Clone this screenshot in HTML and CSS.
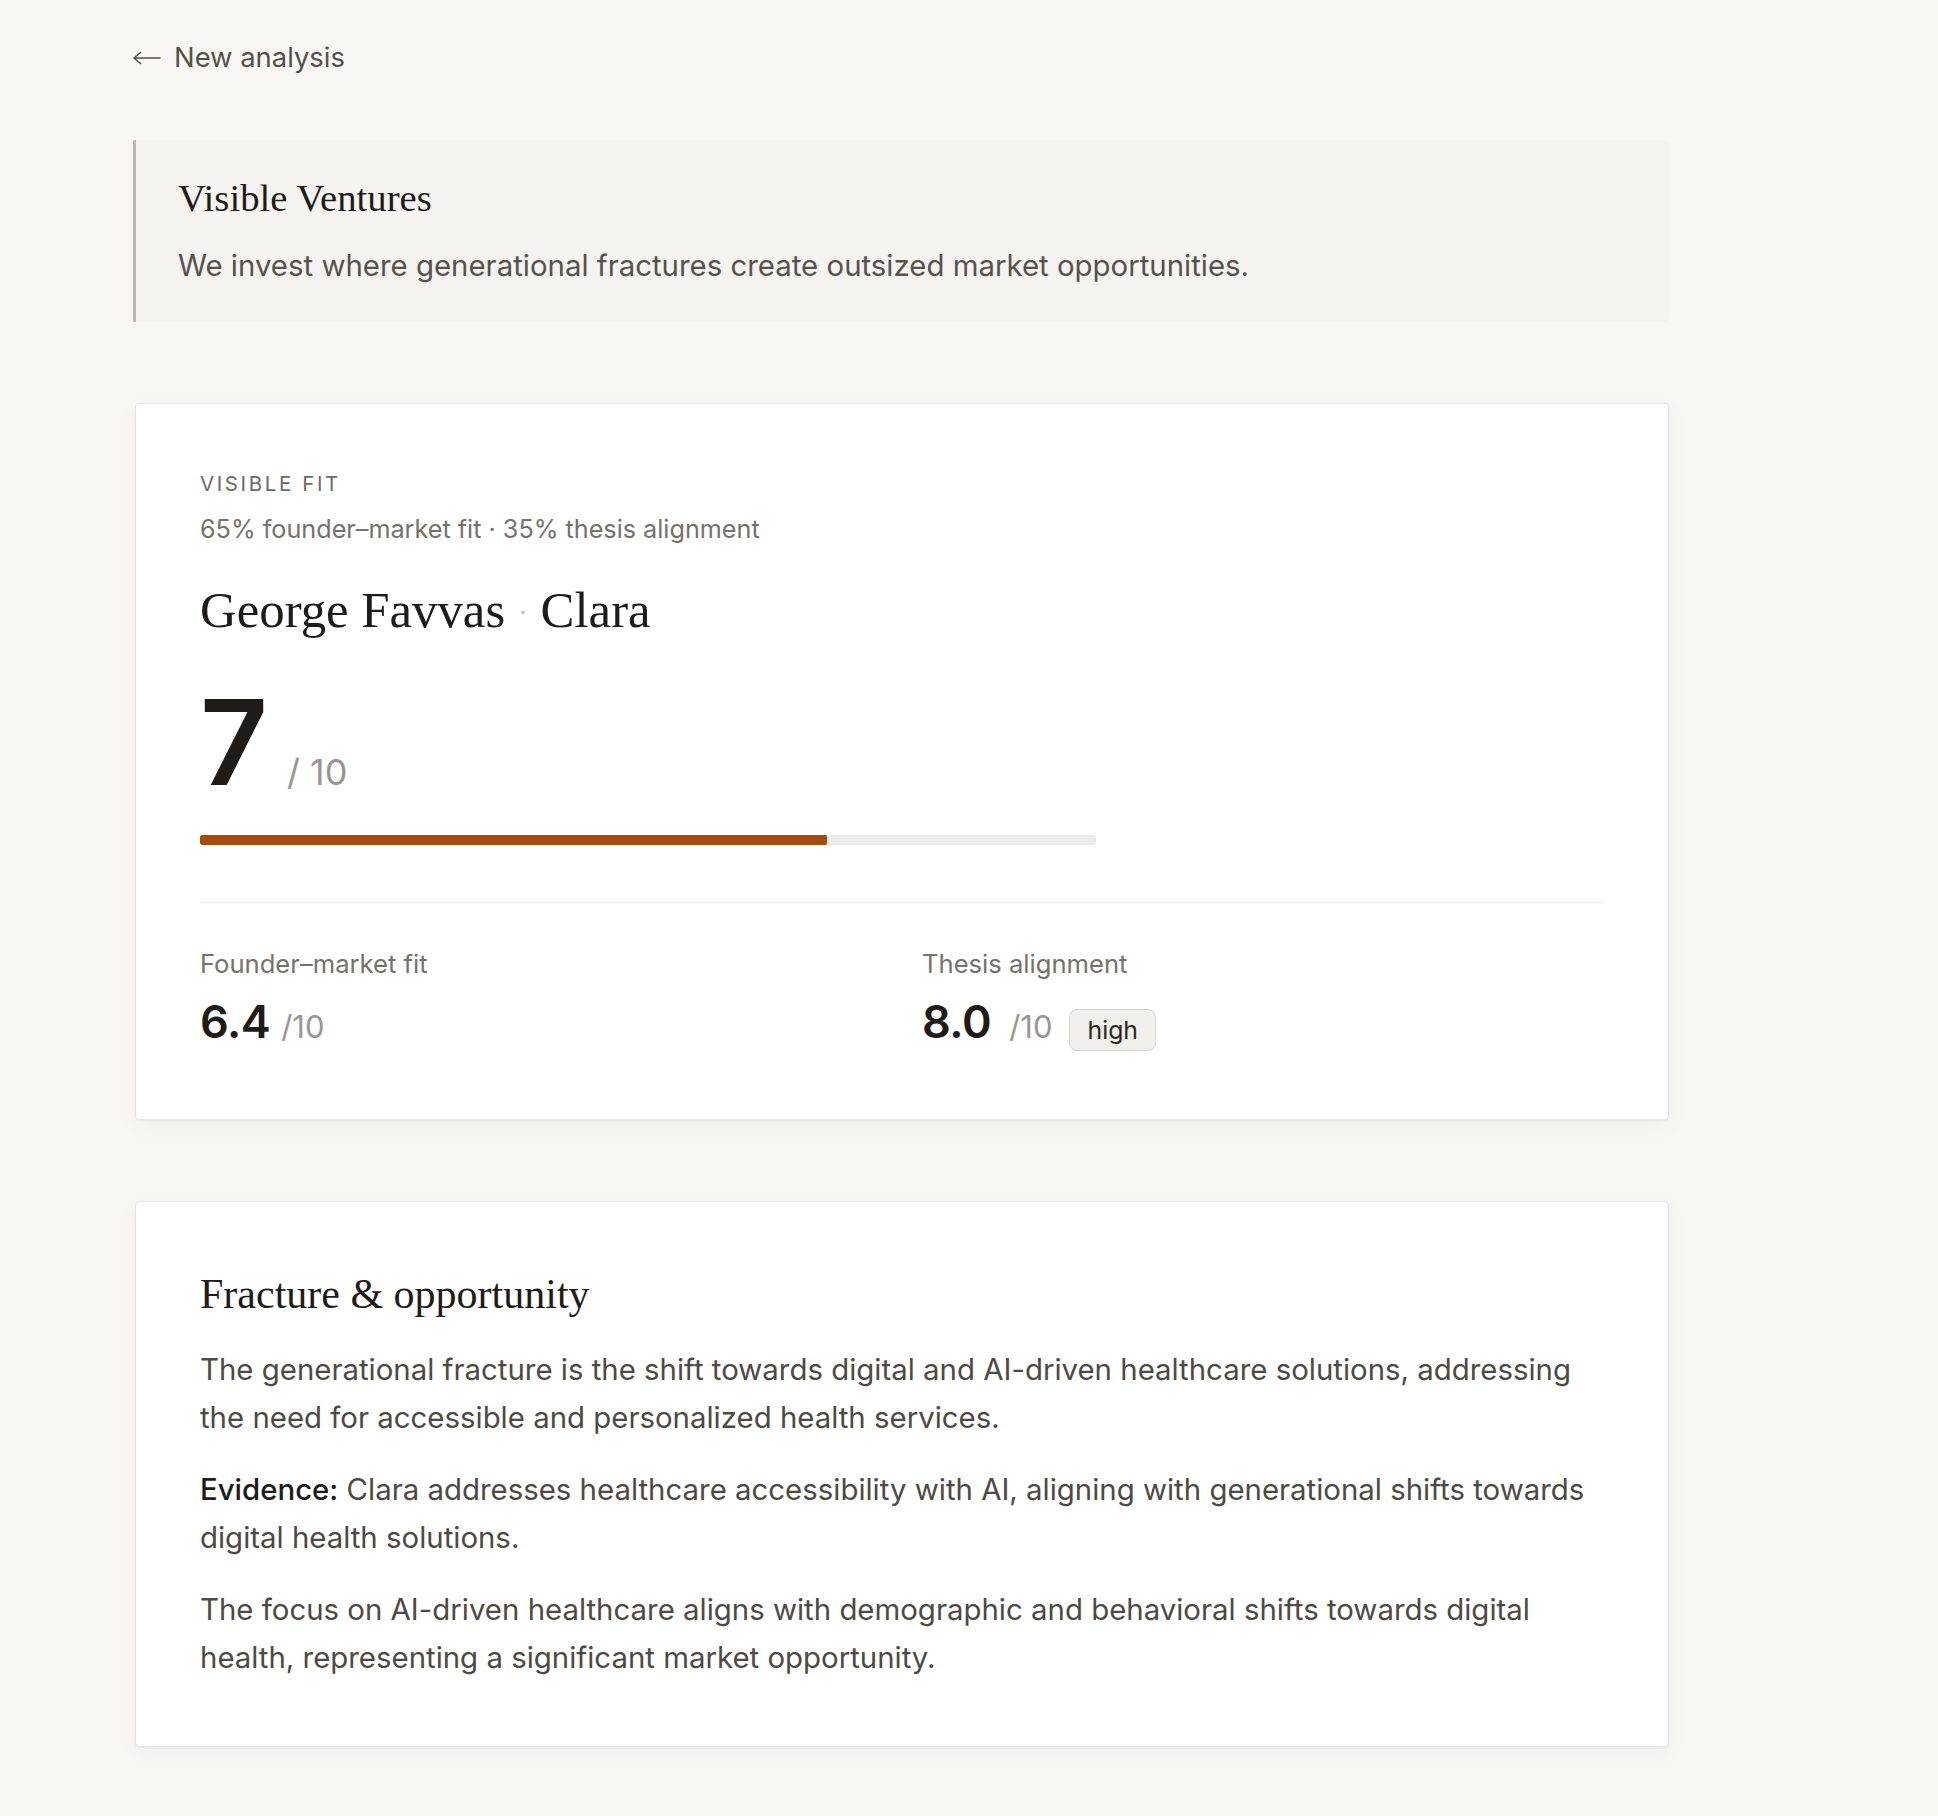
FILE: index.html
```html
<!DOCTYPE html>
<html lang="en">
<head>
<meta charset="utf-8">
<title>Visible Fit — George Favvas · Clara</title>
<link rel="stylesheet" href="styles.css">
</head>
<body>
<main class="page">
  <a class="back" href="#"><svg class="back-arrow" width="28" height="14" viewBox="0 0 28 14" aria-hidden="true"><path d="M1 7 H27 M1 7 L7.5 1.5 M1 7 L7.5 12.5" fill="none" stroke="currentColor" stroke-width="1.6" stroke-linecap="round" stroke-linejoin="round"/></svg><span>New analysis</span></a>

  <section class="thesis">
    <h2 class="thesis-title">Visible Ventures</h2>
    <p class="thesis-text">We invest where generational fractures create outsized market opportunities.</p>
  </section>

  <section class="card score-card">
    <div class="eyebrow">VISIBLE FIT</div>
    <div class="weights">65% founder–market fit · 35% thesis alignment</div>
    <h1 class="name">George Favvas <span class="name-dot">·</span> Clara</h1>
    <div class="score">
      <span class="score-num">7</span>
      <span class="score-max">/ 10</span>
    </div>
    <div class="bar"><div class="bar-fill" style="width: 70%"></div></div>
    <div class="stats">
      <div class="stat">
        <div class="stat-label">Founder–market fit</div>
        <div class="stat-value"><span class="stat-num">6.4</span><span class="stat-max">/10</span></div>
      </div>
      <div class="stat">
        <div class="stat-label">Thesis alignment</div>
        <div class="stat-value"><span class="stat-num">8.0</span><span class="stat-max">/10</span><span class="badge">high</span></div>
      </div>
    </div>
  </section>

  <section class="card text-card">
    <h2 class="section-title">Fracture &amp; opportunity</h2>
    <p class="para">The generational fracture is the shift towards digital and AI-driven healthcare solutions, addressing the need for accessible and personalized health services.</p>
    <p class="para"><span class="lead">Evidence:</span> Clara addresses healthcare accessibility with AI, aligning with generational shifts towards digital health solutions.</p>
    <p class="para">The focus on AI-driven healthcare aligns with demographic and behavioral shifts towards digital health, representing a significant market opportunity.</p>
  </section>
</main>
</body>
</html>
```

FILE: styles.css
```css
* { box-sizing: border-box; }

html, body {
  margin: 0;
  padding: 0;
  background: #f8f7f4;
}

body {
  font-family: Inter, "Noto Sans", "Liberation Sans", sans-serif;
  color: #1e1b19;
}

.page {
  width: 1536px;
  padding: 41px 0 70px 0;
  margin-left: 133px;
  display: flex;
  flex-direction: column;
}

.back {
  align-self: flex-start;
  display: flex;
  align-items: center;
  gap: 13px;
  font-size: 27.4px;
  line-height: 32px;
  color: #55504b;
  text-decoration: none;
}

.back-arrow {
  display: block;
  flex: none;
  margin-top: 1px;
}

.thesis {
  margin-top: 67px;
  background: #f4f3f0;
  border-left: 3px solid #bcb7b1;
  border-radius: 2px 6px 6px 2px;
  padding: 38px 40px 36px 42px;
}

.thesis-title {
  margin: 0;
  font-family: "Liberation Serif", "DejaVu Serif", serif;
  font-weight: 400;
  font-size: 38.7px;
  line-height: 40px;
  color: #1e1b19;
}

.thesis-text {
  margin: 28px 0 0 0;
  font-size: 29.4px;
  line-height: 40px;
  color: #57524d;
}

.card {
  background: #ffffff;
  border: 1px solid #e7e5e1;
  border-radius: 4px;
  box-shadow: 0 1px 2px rgba(40, 30, 20, 0.05), 0 6px 24px rgba(40, 30, 20, 0.04);
  padding: 64px;
  margin-left: 2px;
  width: 1534px;
}

.score-card {
  margin-top: 81px;
  padding-bottom: 69px;
}

.eyebrow {
  font-size: 20.5px;
  line-height: 32px;
  letter-spacing: 2.6px;
  color: #6e6964;
}

.weights {
  margin-top: 13px;
  font-size: 25.2px;
  line-height: 32px;
  color: #76716c;
}

.name {
  margin: 35px 0 0 0;
  font-family: "Liberation Serif", "DejaVu Serif", serif;
  font-weight: 400;
  font-size: 50.8px;
  line-height: 60px;
  color: #1e1b19;
}

.name-dot {
  color: #c9c5c0;
  font-size: 30px;
  vertical-align: 5px;
}

.score {
  margin-top: 41px;
  display: flex;
  align-items: baseline;
  gap: 22px;
}

.score-num {
  font-size: 118px;
  line-height: 118px;
  font-weight: 600;
  letter-spacing: -3px;
  color: #1e1b19;
}

.score-max {
  font-size: 36px;
  color: #9a9590;
  font-weight: 400;
}

.bar {
  margin-top: 34px;
  width: 896px;
  height: 10px;
  background: #eeecea;
  border-radius: 2px;
  overflow: hidden;
}

.bar-fill {
  height: 100%;
  background: #a64b0e;
  border-radius: 2px;
}

.stats {
  margin-top: 57px;
  border-top: 1px solid #efedea;
  padding-top: 46px;
  display: grid;
  grid-template-columns: 1fr 1fr;
  column-gap: 40px;
}

.stat-label {
  font-size: 25.6px;
  line-height: 30px;
  color: #76716c;
}

.stat-value {
  margin-top: 15px;
  display: flex;
  align-items: baseline;
  height: 56px;
}

.stat-num {
  font-size: 45px;
  line-height: 56px;
  font-weight: 600;
  color: #1e1b19;
  letter-spacing: -0.5px;
}

.stat-max {
  margin-left: 11px;
  font-size: 31px;
  color: #9a9590;
}

.stat + .stat .stat-max {
  margin-left: 18px;
}

.badge {
  margin-left: 17px;
  align-self: center;
  font-size: 24.8px;
  line-height: 28px;
  padding: 6px 17px;
  background: #f1efeb;
  border: 1.5px solid #d9d6d1;
  border-radius: 8px;
  color: #2a2623;
  position: relative;
  top: 8px;
}

.text-card {
  margin-top: 81px;
}

.section-title {
  margin: 0;
  font-family: "Liberation Serif", "DejaVu Serif", serif;
  font-weight: 400;
  font-size: 42px;
  line-height: 56px;
  color: #1e1b19;
}

.para {
  margin: 24px 0 0 0;
  font-size: 29.4px;
  line-height: 48px;
  color: #4e4944;
}

.lead {
  font-weight: 500;
  color: #1e1b19;
}
```
